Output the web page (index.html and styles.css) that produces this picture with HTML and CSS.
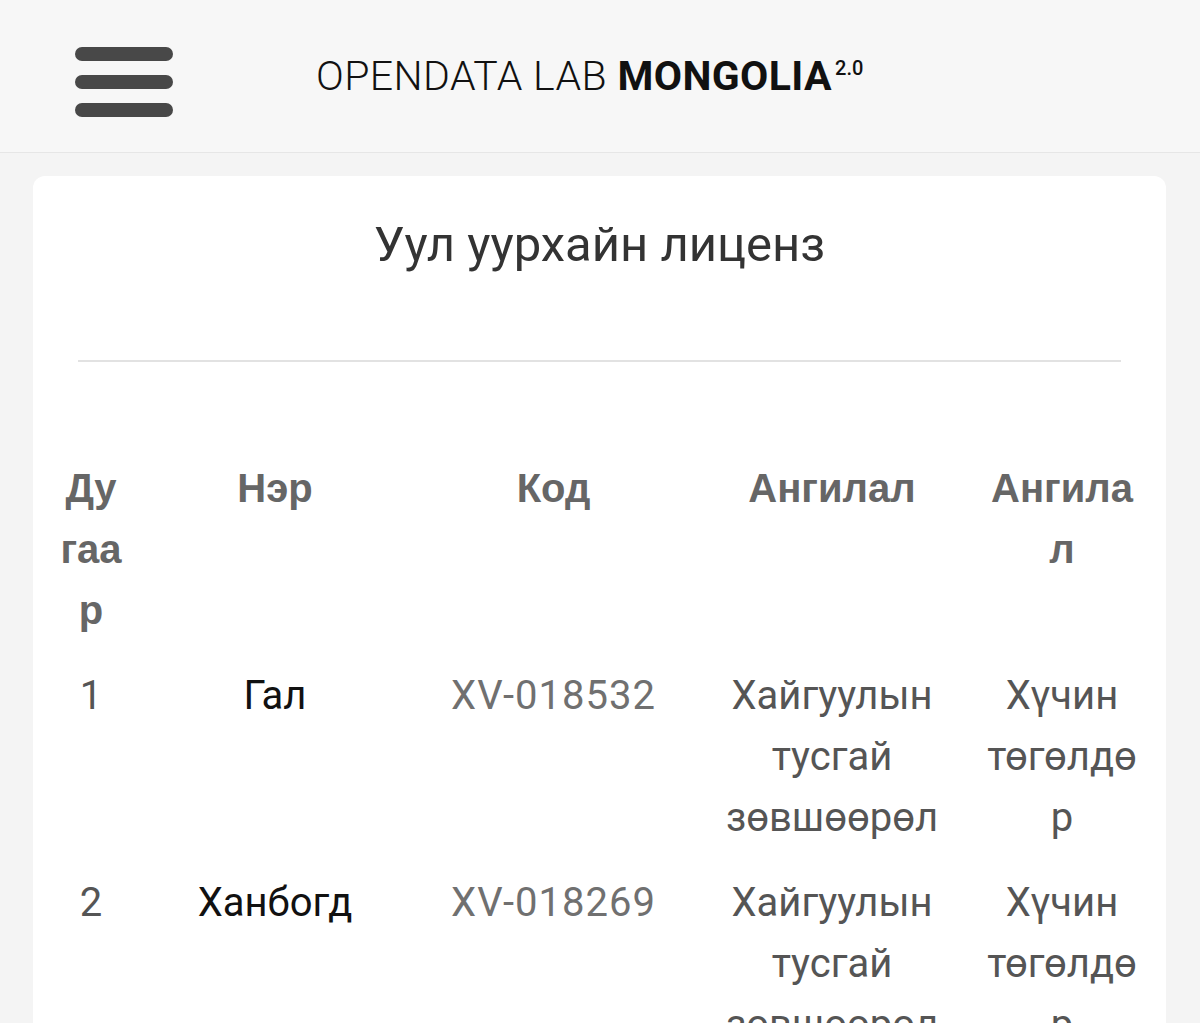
FILE: index.html
```html
<!DOCTYPE html>
<html lang="mn">
<head>
    <meta charset="UTF-8">
    <meta name="viewport" content="width=device-width, initial-scale=1.0">
    <title>Уул уурхайн лиценз</title>
    <link rel="stylesheet" href="styles.css">
</head>
<body>
    <header class="topbar">
        <button class="menu-toggle" aria-label="Menu">
            <span></span>
            <span></span>
            <span></span>
        </button>
        <a class="brand" href="#">OPENDATA LAB <b>MONGOLIA</b><sup>2.0</sup></a>
    </header>

    <main class="page">
        <div class="card">
            <h2 class="card-title">Уул уурхайн лиценз</h2>
            <hr class="divider">

            <table class="license-table">
                <colgroup>
                    <col class="col-num">
                    <col class="col-name">
                    <col class="col-code">
                    <col class="col-type">
                    <col class="col-status">
                </colgroup>
                <thead>
                    <tr>
                        <th>Дугаар</th>
                        <th>Нэр</th>
                        <th>Код</th>
                        <th>Ангилал</th>
                        <th>Ангилал</th>
                    </tr>
                </thead>
                <tbody>
                    <tr>
                        <td>1</td>
                        <td class="name">Гал</td>
                        <td class="code">XV-018532</td>
                        <td>Хайгуулын тусгай зөвшөөрөл</td>
                        <td>Хүчин төгөлдөр</td>
                    </tr>
                    <tr>
                        <td>2</td>
                        <td class="name">Ханбогд</td>
                        <td class="code">XV-018269</td>
                        <td>Хайгуулын тусгай зөвшөөрөл</td>
                        <td>Хүчин төгөлдөр</td>
                    </tr>
                </tbody>
            </table>
        </div>
    </main>
</body>
</html>
```

FILE: styles.css
```css
body {
    margin: 0;
    background-color: #f4f4f4;
    font-family: Roboto, "Liberation Sans", sans-serif;
    color: #555;
}
.topbar {
    display: flex;
    align-items: flex-start;
    height: 152px;
    padding-left: 75px;
    background-color: #f7f7f7;
    border-bottom: 1px solid #e6e6e6;
}
.menu-toggle {
    display: flex;
    flex-direction: column;
    gap: 14px;
    margin-top: 47px;
    padding: 0;
    border: none;
    background: none;
    cursor: pointer;
}
.menu-toggle span {
    display: block;
    width: 98px;
    height: 14px;
    border-radius: 7px;
    background-color: #484848;
}
.brand {
    margin-left: 143px;
    margin-top: 42px;
    font-size: 41px;
    font-weight: 300;
    line-height: 52px;
    letter-spacing: 0.4px;
    color: #111;
    text-decoration: none;
    white-space: nowrap;
}
.brand b {
    font-weight: 700;
}
.brand sup {
    font-size: 20px;
    font-weight: 500;
    letter-spacing: 0;
    vertical-align: 15px;
    margin-left: 3px;
}
.page {
    padding: 23px 34px 0 33px;
}
.card {
    background-color: #fff;
    border-radius: 12px;
    padding: 41px 14px 40px;
    min-height: 900px;
}
.card-title {
    margin: 0;
    font-size: 49px;
    font-weight: 400;
    line-height: 56px;
    text-align: center;
    color: #333;
}
.divider {
    margin: 87px 31px 0;
    border: none;
    border-top: 2px solid #e2e2e2;
}
.license-table {
    width: 1105px;
    margin-top: 85px;
    border-collapse: collapse;
    table-layout: fixed;
}
.col-num { width: 88px; }
.col-name { width: 280px; }
.col-code { width: 277px; }
.col-type { width: 280px; }
.col-status { width: 180px; }
.license-table th,
.license-table td {
    padding: 11px;
    font-size: 40px;
    line-height: 61px;
    text-align: center;
    vertical-align: top;
    overflow-wrap: break-word;
}
.license-table th {
    font-family: "Liberation Sans", Arial, sans-serif;
    font-weight: 700;
    color: #666;
}
.license-table tbody td {
    padding-top: 13px;
    color: #555;
}
.license-table td.name {
    color: #111;
}
.license-table td.code {
    letter-spacing: 1px;
    color: #707070;
}
```
